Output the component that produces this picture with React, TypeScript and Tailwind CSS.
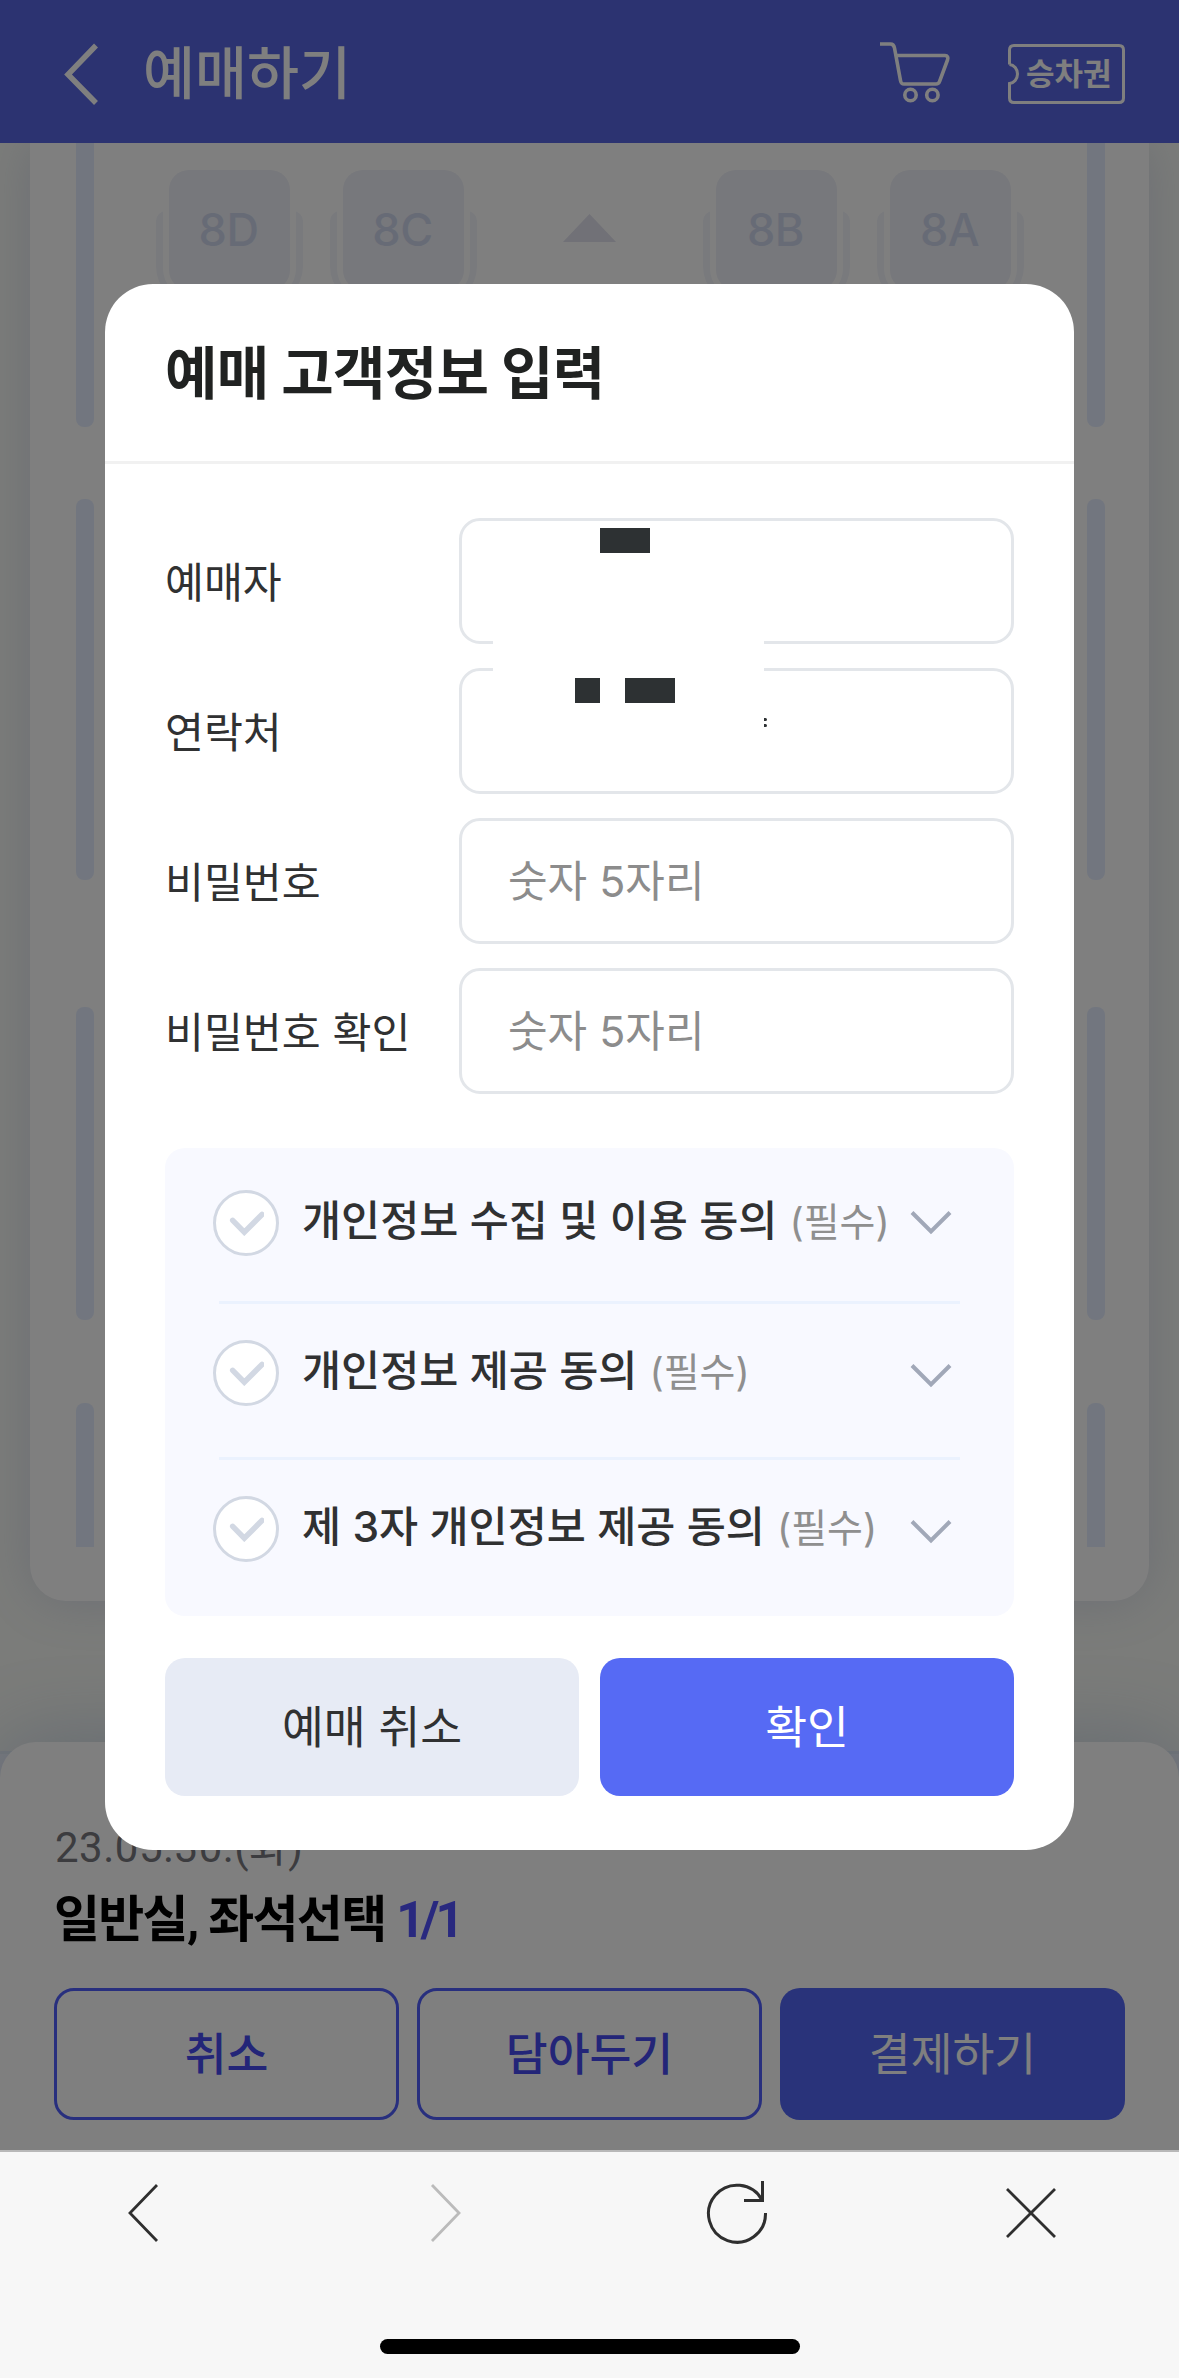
import { useState } from "react";
import clsx from "clsx";

const fields = [
  { label: "예매자", placeholder: "" },
  { label: "연락처", placeholder: "" },
  { label: "비밀번호", placeholder: "숫자 5자리" },
  { label: "비밀번호 확인", placeholder: "숫자 5자리" },
];

const agreements = [
  { id: 1, title: "개인정보 수집 및 이용 동의", row: "h-[153px] pb-[3px]" },
  { id: 2, title: "개인정보 제공 동의", row: "h-[156px] pb-[15px]" },
  { id: 3, title: "제 3자 개인정보 제공 동의", row: "h-[159px] pb-[18px]" },
];

function Seat({ name }: { name: string }) {
  return (
    <div className="relative h-[140px] w-[147px]">
      <div className="absolute inset-x-0 top-[41px] h-[95px] rounded-t-[10px] rounded-b-[40px] bg-[#f2f4fb]" />
      <div className="absolute inset-x-[7px] top-0 h-[127px] rounded-b-[28px] bg-white" />
      <div className="absolute inset-x-[13px] top-0 flex h-[120px] items-center justify-center rounded-[20px] bg-[#eef0f8] pr-[2px] pb-[1px] text-[45px] leading-none font-medium tracking-[-0.500px] text-[#ced6ec]">
        {name}
      </div>
    </div>
  );
}

function WindowBars() {
  return (
    <div className="flex w-[18px] flex-col">
      <div className="h-[284px] rounded-b-[8px] bg-[#e4edff]" />
      <div className="mt-[72px] h-[381px] rounded-[8px] bg-[#e4edff]" />
      <div className="mt-[127px] h-[313px] rounded-[8px] bg-[#e4edff]" />
      <div className="mt-[83px] h-[144px] rounded-t-[8px] bg-[#e4edff]" />
    </div>
  );
}

function Header() {
  return (
    <header className="relative flex h-[143px] shrink-0 items-center bg-[#5866e2] pr-[54px] pl-[64px] text-white">
      <svg width="36" height="62" viewBox="0 0 36 62" fill="none" className="mt-[5px]">
        <path d="M32 2.5L4 31.5L32 60" stroke="currentColor" strokeWidth="5.5" />
      </svg>
      <h1 className="mt-[6px] ml-[43px] text-[56.500px] leading-none font-medium">예매하기</h1>

      <svg width="72" height="62" viewBox="0 0 72 62" fill="none" className="ml-auto" stroke="currentColor" strokeWidth="3.6">
        <path d="M0 3H10.5C13 3 14 4.500 14.500 7L20.500 39.500C21 42 21.500 43 24 43H56C58 43 59 42 59.500 40.500L67.500 19C68.500 16.500 67.500 14.500 65 14.500H16" />
        <circle cx="30.500" cy="54" r="5.700" />
        <circle cx="52.400" cy="54" r="5.700" />
      </svg>

      <div className="relative mt-[5px] ml-[56px] h-[60px] w-[117px]">
        <svg width="117" height="60" viewBox="0 0 117 60" fill="none" className="absolute inset-0">
          <path
            d="M1.500 20.500V6Q1.500 1.500 6 1.500H111Q115.500 1.500 115.500 6V54Q115.500 58.500 111 58.500H6Q1.500 58.500 1.500 54V39.500C6 39 9.500 35 9.500 30S6 21 1.500 20.500"
            stroke="currentColor"
            strokeWidth="3"
          />
        </svg>
        <span className="absolute top-[14px] left-[18px] text-[31px] leading-none font-bold">승차권</span>
      </div>
    </header>
  );
}

function SeatMap() {
  return (
    <section className="h-[1599px] shrink-0 px-[30px]">
      <div className="flex h-[1458px] rounded-b-[36px] bg-white pr-[44px] pl-[46px] shadow-[0_0_50px_rgba(110,125,185,0.22)]">
        <WindowBars />
        <div className="flex flex-1 pt-[27px] pl-[62px]">
          <div className="flex gap-[27px]">
            <Seat name="8D" />
            <Seat name="8C" />
          </div>
          <svg width="53" height="28" viewBox="0 0 53 28" className="mt-[44px] ml-[86px]">
            <path d="M26.500 0L53 28H0Z" fill="#e2e2ee" />
          </svg>
          <div className="ml-[87px] flex gap-[27px]">
            <Seat name="8B" />
            <Seat name="8A" />
          </div>
        </div>
        <WindowBars />
      </div>
    </section>
  );
}

function BottomSheet() {
  return (
    <div className="relative h-[408px] shrink-0">
      <div className="absolute inset-x-0 top-[9px] h-[120px] border-t-3 border-[#e6edf4] bg-[#f0f3fc]" />
      <div className="relative h-full rounded-t-[36px] bg-white px-[54px] pt-[85px] shadow-[0_-4px_80px_rgba(100,135,185,0.3)]">
        <p className="pl-[1px] font-['Roboto','Noto_Sans_CJK_KR',sans-serif] text-[42px] leading-[42px] tracking-[0.500px] text-[#78787f]">
          23.05.30.(화)
        </p>
        <p className="mt-[26px] font-['Roboto','Noto_Sans_CJK_KR',sans-serif] text-[50px] leading-[50px] font-bold tracking-[-1.700px] text-black">
          일반실, 좌석선택 <span className="tracking-[-4px] text-[#5252ff]">1/1</span>
        </p>
        <div className="mt-[43px] grid grid-cols-3 gap-[18px] text-[45.500px] leading-none">
          <button className="h-[132px] rounded-[20px] border-3 border-[#505ffc] pt-[2px] font-medium text-[#464af0]">취소</button>
          <button className="h-[132px] rounded-[20px] border-3 border-[#505ffc] pt-[2px] font-medium text-[#464af0]">담아두기</button>
          <button className="h-[132px] rounded-[20px] bg-[#5266f4] pt-[2px] text-white">결제하기</button>
        </div>
      </div>
    </div>
  );
}

function CustomerModal() {
  const [checked, setChecked] = useState<number[]>([]);

  const toggle = (id: number) => {
    setChecked((prev) =>
      prev.includes(id) ? prev.filter((v) => v !== id) : [...prev, id],
    );
  };

  return (
    <div className="h-[1566px] w-[969px] overflow-hidden rounded-[48px] bg-white text-[#303132]">
      <div className="flex h-[180px] items-center border-b-3 border-[#f1f1f1] pt-[2px] pl-[60px]">
        <h2 className="text-[57px] leading-none font-bold tracking-[-0.700px] text-[#202221]">
          예매 고객정보 입력
        </h2>
      </div>

      <div className="px-[60px] pt-[54px]">
        <div className="relative flex flex-col gap-[24px]">
          {fields.map((field) => (
            <div key={field.label} className="flex items-center">
              <label className="w-[294px] shrink-0 pt-[4px] text-[42.300px] leading-none">{field.label}</label>
              <input
                placeholder={field.placeholder}
                className="h-[126px] w-[555px] rounded-[21px] border-3 border-[#e3e6ea] px-[46px] text-[43px] outline-none placeholder:text-[#8c8c8c]"
              />
            </div>
          ))}

          {/* masked name and phone */}
          <div className="absolute top-[82px] left-[328px] h-[130px] w-[271px] bg-white" />
          <div className="absolute top-[10px] left-[435px] h-[25px] w-[50px] bg-[#2d3133]" />
          <div className="absolute top-[160px] left-[410px] h-[25px] w-[25px] bg-[#2d3133]" />
          <div className="absolute top-[160px] left-[460px] h-[25px] w-[50px] bg-[#2d3133]" />
          <div className="absolute top-[200px] left-[599px] h-[3px] w-[3px] rounded-r-full bg-[#2d3133]" />
          <div className="absolute top-[206px] left-[599px] h-[3px] w-[3px] rounded-r-full bg-[#2d3133]" />
        </div>

        <ul className="mt-[54px] h-[468px] rounded-[20px] bg-[#f8f9ff] px-[54px]">
          {agreements.map((item, i) => (
            <li
              key={item.id}
              className={clsx("flex items-center", item.row, i > 0 && "border-t-3 border-[#ebf2fe]")}
            >
              <button
                onClick={() => toggle(item.id)}
                className={clsx(
                  "-ml-[6px] flex size-[66px] shrink-0 items-center justify-center rounded-full border-3 bg-white",
                  checked.includes(item.id)
                    ? "border-[#566af4] text-[#566af4]"
                    : "border-[#d2d8e3] text-[#d2d8e3]",
                )}
              >
                <svg width="36" height="26" viewBox="0 0 36 26" fill="none">
                  <path d="M4.700 10.300L16.300 22.200L34 4.500" stroke="currentColor" strokeWidth="5.500" strokeLinecap="round" />
                </svg>
              </button>
              <span className="mb-[3px] ml-[23px] text-[42.500px] leading-none font-medium whitespace-nowrap">
                {item.title}
                <span className="ml-[12px] text-[39px] font-normal text-[#8f8f8f]">(필수)</span>
              </span>
              <svg
                width="42"
                height="26"
                viewBox="0 0 42 26"
                fill="none"
                className={clsx("mr-[8px] ml-auto shrink-0", i > 0 && "mt-[5px]")}
              >
                <path d="M2 2.500L21 21.500L40 2.500" stroke="#a1a8b8" strokeWidth="4" />
              </svg>
            </li>
          ))}
        </ul>

        <div className="mt-[42px] grid grid-cols-2 gap-[21px] text-[45.500px] leading-none">
          <button className="h-[138px] rounded-[20px] bg-[#e7ebf5] pt-[2px]">예매 취소</button>
          <button className="h-[138px] rounded-[20px] bg-[#566af4] pt-[2px] text-white">확인</button>
        </div>
      </div>
    </div>
  );
}

function BrowserBar() {
  return (
    <nav className="flex h-[228px] flex-col items-center border-t-2 border-[#b8b8b8] bg-[#f7f7f7]">
      <div className="flex h-[122px] w-full items-center pl-[127px]">
        <svg width="32" height="60" viewBox="0 0 32 60" fill="none" stroke="#2f2f2f" strokeWidth="2.800">
          <path d="M30 2L3 30L30 58" />
        </svg>
        <svg width="32" height="60" viewBox="0 0 32 60" fill="none" stroke="#bbbbbb" strokeWidth="2.800" className="ml-[271px]">
          <path d="M2 2L29 30L2 58" />
        </svg>
        <svg width="62" height="66" viewBox="0 0 62 66" fill="none" stroke="#2f2f2f" strokeWidth="3" className="ml-[244px]">
          <path d="M59.500 33A28.500 28.500 0 1 1 56 20M56.500 1V20.500H38" />
        </svg>
        <svg width="50" height="52" viewBox="0 0 50 52" fill="none" stroke="#2f2f2f" strokeWidth="2.800" className="ml-[238px]">
          <path d="M1 2L49 50M49 2L1 50" />
        </svg>
      </div>
      <div className="mt-[65px] h-[15px] w-[420px] rounded-full bg-black" />
    </nav>
  );
}

export default function App() {
  return (
    <div className="h-[2378px] w-[1179px] overflow-hidden font-['Inter','Noto_Sans_CJK_KR',sans-serif]">
      <div className="relative flex h-[2150px] flex-col overflow-hidden bg-[#f6f8f4]">
        <Header />
        <SeatMap />
        <BottomSheet />
        <div className="absolute inset-0 flex justify-center bg-black/50 pt-[284px]">
          <CustomerModal />
        </div>
      </div>
      <BrowserBar />
    </div>
  );
}
